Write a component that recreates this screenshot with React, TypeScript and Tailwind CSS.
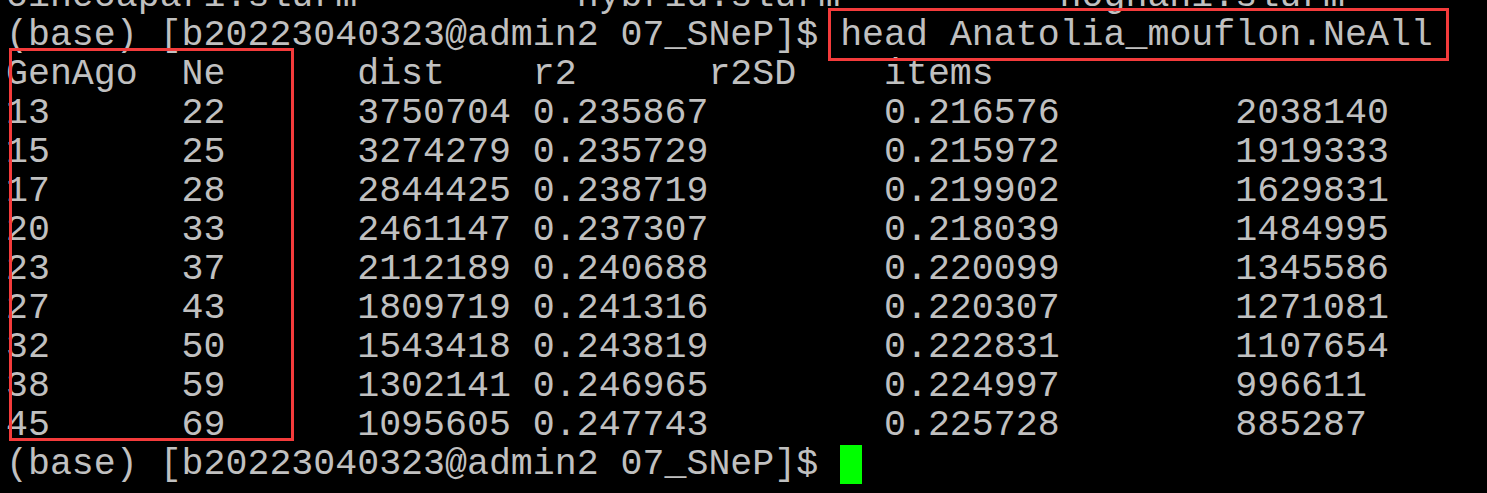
const PROMPT = '(base) [b20223040323@admin2 07_SNeP]$ ';

const pad = (cells: string[], stops: number[]) =>
  cells.reduce((line, cell, i) => line.padEnd(stops[i], ' ') + cell, '');

const HEADER = pad(['GenAgo', 'Ne', 'dist', 'r2', 'r2SD', 'items'], [0, 8, 16, 24, 32, 40]);

const ROWS: string[][] = [
  ['13', '22', '3750704', '0.235867', '0.216576', '2038140'],
  ['15', '25', '3274279', '0.235729', '0.215972', '1919333'],
  ['17', '28', '2844425', '0.238719', '0.219902', '1629831'],
  ['20', '33', '2461147', '0.237307', '0.218039', '1484995'],
  ['23', '37', '2112189', '0.240688', '0.220099', '1345586'],
  ['27', '43', '1809719', '0.241316', '0.220307', '1271081'],
  ['32', '50', '1543418', '0.243819', '0.222831', '1107654'],
  ['38', '59', '1302141', '0.246965', '0.224997', '996611'],
  ['45', '69', '1095605', '0.247743', '0.225728', '885287'],
];

export default function App() {
  return (
    <div className="h-[493px] w-[1487px] overflow-hidden bg-black">
      <div className="relative -mt-[23px] pl-[6px] font-['Liberation_Mono','Courier_New',monospace] text-[36.58px] leading-[39px] text-[#c0c0c0] whitespace-pre">
        <div>{pad(['cinecapari.slurm', 'hybrid.slurm', 'hoghani.slurm'], [0, 26, 48])}</div>
        <div>{PROMPT}head Anatolia_mouflon.NeAll</div>
        <div>{HEADER}</div>
        {ROWS.map((r) => (
          <div key={r[0]}>{pad(r, [0, 8, 16, 24, 40, 56])}</div>
        ))}
        <div className="flex">
          <span>{PROMPT}</span>
          <span className="inline-block h-[39px] w-[22px] bg-[#00ff00]" />
        </div>

        {/* red annotation boxes */}
        <span className="absolute left-[828px] top-[31px] h-[53px] w-[621px] border-[3px] border-[#f43b3b]" />
        <span className="absolute left-[9px] top-[71px] h-[393px] w-[285px] border-[3px] border-[#f43b3b]" />
      </div>
    </div>
  );
}
